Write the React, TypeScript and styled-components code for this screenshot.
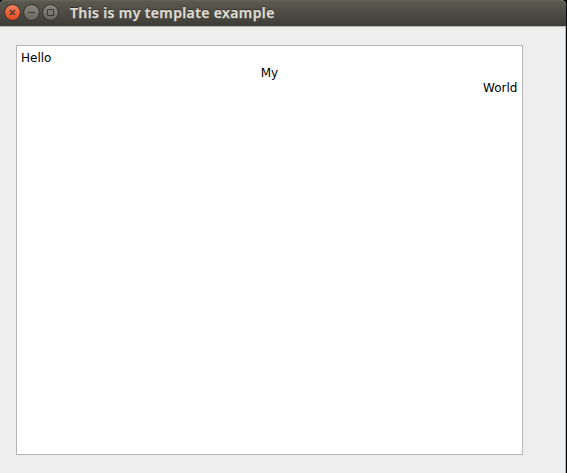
import React from "react";
import styled, { createGlobalStyle } from "styled-components";

const GlobalStyle = createGlobalStyle`
  html, body { margin: 0; padding: 0; background: #060708; overflow: hidden; }
  * { box-sizing: border-box; }
`;

const Window = styled.main`
  display: flex;
  flex-direction: column;
  width: 566px;
  height: 473px;
  background: #eeeeee;
  border-radius: 5px 5px 0 0;
  overflow: hidden;
`;

const TitleBar = styled.header`
  display: flex;
  flex: none;
  align-items: center;
  height: 26px;
  padding: 0 0 2px 4px;
  background: linear-gradient(#5c594f, #3d3c38);
  border-top: 1px solid #65625a;
`;

const Controls = styled.div`
  display: flex;
  gap: 2px;
`;

const ControlButton = styled.button<{ $close?: boolean }>`
  display: grid;
  place-items: center;
  width: 17px;
  height: 17px;
  padding: 0;
  border: 1px solid ${(p) => (p.$close ? "#51352b" : "#383733")};
  border-radius: 50%;
  background: ${(p) =>
    p.$close
      ? "linear-gradient(#f47f5b, #e4491e)"
      : "linear-gradient(#89877f, #68665f)"};
  background-clip: padding-box;
`;

const Glyph = styled.svg`
  display: block;
  width: 15px;
  height: 15px;
  fill: none;
  stroke: #3a3832;
`;

const Title = styled.h1`
  margin: 0 0 0 11px;
  color: #dfdbd2;
  font: 600 14px/20px "Noto Sans", sans-serif;
  letter-spacing: 0.37px;
  white-space: nowrap;
  text-shadow: 0 -1px 0 #2f2e2a;
  -webkit-text-stroke: 0.25px #dfdbd2;
`;

const Content = styled.section`
  flex: 1;
  padding: 18px 0 0 16px;
  border-top: 1px solid #b5b5b3;
  border-right: 1px solid #b5b5b3;
`;

const Editor = styled.div`
  width: 507px;
  height: 410px;
  padding: 5px 4px 4px;
  background: #ffffff;
  border: 1px solid #b5b5b5;
  color: #000000;
  font: 12px/15px "DejaVu Sans", sans-serif;
`;

const Line = styled.p<{ $align: "left" | "center" | "right" }>`
  margin: 0;
  padding-right: ${(p) => (p.$align === "right" ? "0.6px" : "0")};
  text-align: ${(p) => p.$align};
`;

export default function App() {
  return (
    <>
      <GlobalStyle />
      <Window>
        <TitleBar>
          <Controls>
            <ControlButton $close aria-label="Close">
              <Glyph viewBox="0 0 15 15">
                <path d="M5 5l5 5M10 5l-5 5" strokeWidth="1.2" />
              </Glyph>
            </ControlButton>
            <ControlButton aria-label="Minimize">
              <Glyph viewBox="0 0 15 15">
                <path d="M4 7.5h7" />
              </Glyph>
            </ControlButton>
            <ControlButton aria-label="Maximize">
              <Glyph viewBox="0 0 15 15">
                <path d="M4.5 4.5h6v6h-6z" />
              </Glyph>
            </ControlButton>
          </Controls>
          <Title>This is my template example</Title>
        </TitleBar>
        <Content>
          <Editor>
            <Line $align="left">Hello</Line>
            <Line $align="center">My</Line>
            <Line $align="right">World</Line>
          </Editor>
        </Content>
      </Window>
    </>
  );
}
